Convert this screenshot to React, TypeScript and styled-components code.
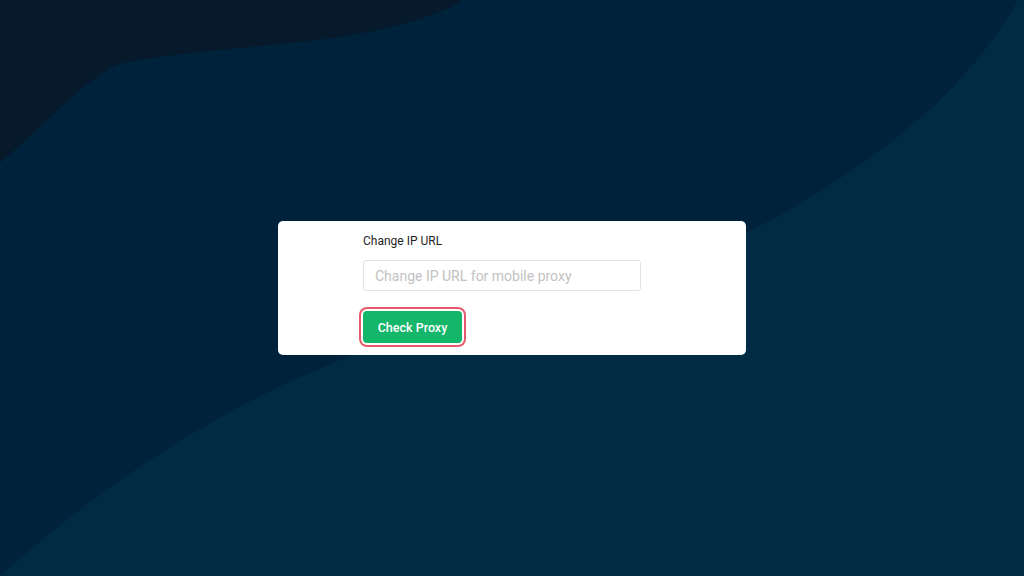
import styled, { createGlobalStyle } from "styled-components"

const GlobalStyle = createGlobalStyle`
    html, body {
        margin: 0;
        padding: 0;
        height: 100%;
    }
    body {
        font-family: Roboto, "Liberation Sans", Arial, sans-serif;
        background: #00223a;
    }
`

const Page = styled.div`
    position: relative;
    width: 100vw;
    height: 100vh;
    overflow: hidden;
    display: flex;
    align-items: center;
    justify-content: center;
    background: #00223a;
`

const Waves = styled.svg`
    position: absolute;
    inset: 0;
    width: 100%;
    height: 100%;
`

const Card = styled.div`
    position: relative;
    width: 468px;
    box-sizing: border-box;
    padding: 12px 0 12px 85px;
    background: #fff;
    border-radius: 5px;
    display: flex;
    flex-direction: column;
    align-items: flex-start;
`

const Label = styled.label`
    font-size: 12px;
    line-height: 16px;
    color: #1e1e1e;
    margin-bottom: 11px;
`

const Input = styled.input`
    width: 278px;
    height: 31px;
    box-sizing: border-box;
    padding: 0 11px;
    border: 1px solid #e2e2e2;
    border-radius: 3px;
    font-family: inherit;
    font-size: 14px;
    color: #333;
    outline: none;
    &::placeholder {
        color: #c2c2c2;
    }
`

const Button = styled.button<{ focused?: boolean }>`
    margin-top: 20px;
    height: 32px;
    width: 99px;
    padding: 0;
    border: none;
    border-radius: 4px;
    background: #14b66a;
    color: #fff;
    font-family: inherit;
    font-size: 12.5px;
    font-weight: 500;
    cursor: pointer;
    box-shadow: ${(p) =>
        p.focused ? "0 0 0 2px #fff, 0 0 0 4px #e6596d" : "none"};
`

export default function App() {
    return (
        <Page>
            <GlobalStyle />
            <Waves viewBox="0 0 1024 576" preserveAspectRatio="none">
                <path
                    fill="#061a2c"
                    d="M0 0 L463 0 C440 15 400 27 340 37 C260 48 170 52 120 64 C90 75 60 110 0 163 Z"
                />
                <path
                    fill="#012b45"
                    d="M1018 0 C985 60 930 115 867 160 C810 200 760 228 700 255 L420 330 C300 370 150 440 0 576 L1024 576 L1024 0 Z"
                />
            </Waves>
            <Card>
                <Label htmlFor="change-ip">Change IP URL</Label>
                <Input id="change-ip" placeholder="Change IP URL for mobile proxy" />
                <Button focused>Check Proxy</Button>
            </Card>
        </Page>
    )
}
